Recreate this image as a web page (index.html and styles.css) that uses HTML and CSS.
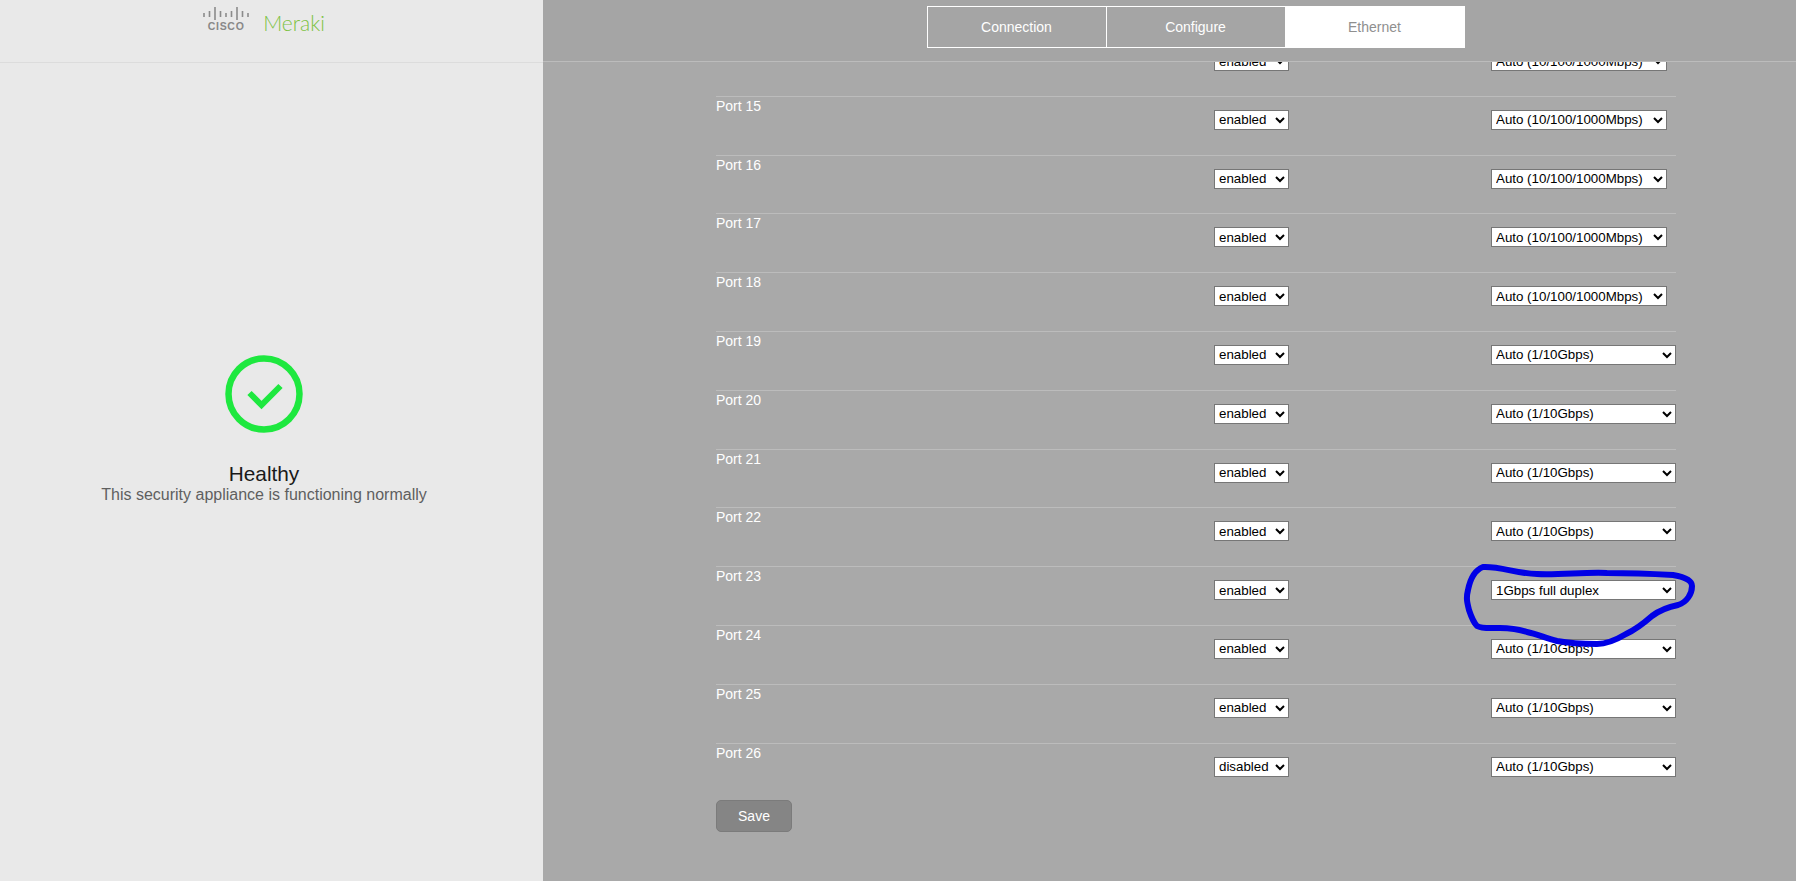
FILE: index.html
```html
<!DOCTYPE html>
<html lang="en">
<head>
  <meta charset="UTF-8">
  <meta name="viewport" content="width=device-width, initial-scale=1.0">
  <title>Meraki Local Status</title>
  <link rel="stylesheet" href="styles.css">
</head>
<body>
  <aside class="sidebar">
    <div class="sidebar-header">
      <div class="cisco-logo">
        <svg class="cisco-bars" width="46" height="13" viewBox="0 0 46 13">
          <path d="M1 6v4M6.500 4v6M12 0v13M17.500 4v6M23 6v4M28.500 4v6M34 0v13M39.500 4v6M45 6v4"/>
        </svg>
        <span class="cisco-word">CISCO</span>
      </div>
      <span class="meraki-word">Meraki</span>
    </div>
    <div class="status">
      <svg class="status-icon" width="78" height="78" viewBox="0 0 78 78">
        <circle cx="39" cy="39" r="35.500"/>
        <path d="M24.500 38 L36.500 50 L55.500 31"/>
      </svg>
      <div class="status-title">Healthy</div>
      <div class="status-text">This security appliance is functioning normally</div>
    </div>
  </aside>

  <main class="main">
    <header class="topbar">
      <nav class="tabs">
        <a class="tab">Connection</a>
        <a class="tab">Configure</a>
        <a class="tab tab-active">Ethernet</a>
      </nav>
    </header>

    <div class="scroller">
      <form class="ports">
        <div class="port-row">
          <div>Port 14</div>
          <select class="sel-state"><option>enabled</option></select>
          <select class="sel-speed"><option>Auto (10/100/1000Mbps)</option></select>
        </div>
        <div class="port-row">
          <div>Port 15</div>
          <select class="sel-state"><option>enabled</option></select>
          <select class="sel-speed"><option>Auto (10/100/1000Mbps)</option></select>
        </div>
        <div class="port-row">
          <div>Port 16</div>
          <select class="sel-state"><option>enabled</option></select>
          <select class="sel-speed"><option>Auto (10/100/1000Mbps)</option></select>
        </div>
        <div class="port-row">
          <div>Port 17</div>
          <select class="sel-state"><option>enabled</option></select>
          <select class="sel-speed"><option>Auto (10/100/1000Mbps)</option></select>
        </div>
        <div class="port-row">
          <div>Port 18</div>
          <select class="sel-state"><option>enabled</option></select>
          <select class="sel-speed"><option>Auto (10/100/1000Mbps)</option></select>
        </div>
        <div class="port-row">
          <div>Port 19</div>
          <select class="sel-state"><option>enabled</option></select>
          <select class="sel-speed sel-wide"><option>Auto (1/10Gbps)</option></select>
        </div>
        <div class="port-row">
          <div>Port 20</div>
          <select class="sel-state"><option>enabled</option></select>
          <select class="sel-speed sel-wide"><option>Auto (1/10Gbps)</option></select>
        </div>
        <div class="port-row">
          <div>Port 21</div>
          <select class="sel-state"><option>enabled</option></select>
          <select class="sel-speed sel-wide"><option>Auto (1/10Gbps)</option></select>
        </div>
        <div class="port-row">
          <div>Port 22</div>
          <select class="sel-state"><option>enabled</option></select>
          <select class="sel-speed sel-wide"><option>Auto (1/10Gbps)</option></select>
        </div>
        <div class="port-row">
          <div>Port 23</div>
          <select class="sel-state"><option>enabled</option></select>
          <select class="sel-speed sel-wide"><option>1Gbps full duplex</option></select>
        </div>
        <div class="port-row">
          <div>Port 24</div>
          <select class="sel-state"><option>enabled</option></select>
          <select class="sel-speed sel-wide"><option>Auto (1/10Gbps)</option></select>
        </div>
        <div class="port-row">
          <div>Port 25</div>
          <select class="sel-state"><option>enabled</option></select>
          <select class="sel-speed sel-wide"><option>Auto (1/10Gbps)</option></select>
        </div>
        <div class="port-row">
          <div>Port 26</div>
          <select class="sel-state"><option>disabled</option></select>
          <select class="sel-speed sel-wide"><option>Auto (1/10Gbps)</option></select>
        </div>
        <button type="button" class="save-button">Save</button>
      </form>
    </div>

    <!-- hand drawn marker ring round the port 23 speed -->
    <svg class="marker" width="280" height="110" viewBox="0 0 280 110">
      <path d="M43 17 C60 16 78 24 97 24 C120 25 145 22 167 23 C190 23 215 24 233 25 C245 27 252 30 252 36 C252 44 247 52 238 55 C228 57 220 60 212 66 C204 73 197 79 186 84 C176 90 165 94 157 94 C140 94 128 93 117 91 C105 88 97 84 87 82 C78 79 70 78 60 78 C50 78 42 79 37 76 C33 72 31 66 29 60 C27 52 26 48 28 40 C30 30 35 20 43 17 Z"/>
    </svg>
  </main>
</body>
</html>
```

FILE: styles.css
```css
* {
  box-sizing: border-box;
}
body {
  margin: 0;
  height: 100vh;
  display: flex;
  overflow: hidden;
  font-family: "Liberation Sans", Arial, sans-serif;
  font-size: 14px;
}

/* left column */
.sidebar {
  width: 543px;
  flex: none;
  padding-right: 15px;
  background-color: #e9e9e9;
  box-shadow: inset 0 0 0 0 #000;
}
.sidebar-header {
  height: 63px;
  margin-right: -15px;
  padding-right: 15px;
  padding-top: 7px;
  border-bottom: 1px solid #dcdcdc;
  display: flex;
  justify-content: center;
  align-items: flex-start;
  gap: 14px;
}
.cisco-logo {
  width: 46px;
  display: flex;
  flex-direction: column;
  align-items: center;
}
.cisco-bars path {
  stroke: #8b8b8b;
  stroke-width: 1.600;
  fill: none;
}
.cisco-word {
  font-size: 10.500px;
  font-weight: bold;
  line-height: 11px;
  letter-spacing: 0.700px;
  color: #888;
  margin-top: 1px;
}
.meraki-word {
  font-family: Lato, "Open Sans", sans-serif;
  font-weight: 300;
  font-size: 21px;
  line-height: 32px;
  color: #7cc242;
}
.status {
  padding-top: 292px;
  display: flex;
  flex-direction: column;
  align-items: center;
}
.status-icon circle {
  fill: none;
  stroke: #1ee83f;
  stroke-width: 6.500;
}
.status-icon path {
  fill: none;
  stroke: #1ee83f;
  stroke-width: 6;
}
.status-title {
  margin-top: 29px;
  font-size: 20.800px;
  line-height: 24px;
  color: #1a1a1a;
}
.status-text {
  font-size: 16px;
  line-height: 18px;
  color: #5f5f5f;
}

/* right column */
.main {
  flex: 1;
  position: relative;
  display: flex;
  flex-direction: column;
  background-color: #a9a9a9;
  color: #fff;
}
.topbar {
  height: 62px;
  flex: none;
  padding: 6px 0 0 173px;
  background-color: #a5a5a5;
  border-bottom: 1px solid #bcbcbc;
}
.tabs {
  display: flex;
  width: 960px;
  justify-content: center;
}
.tab {
  width: 180px;
  height: 42px;
  line-height: 40px;
  text-align: center;
  border: 1px solid #fff;
  margin-left: -1px;
}
.tab-active {
  background-color: #fff;
  color: #8f8f8f;
}
.scroller {
  flex: 1;
  overflow: hidden;
  padding-left: 173px;
}
.ports {
  width: 960px;
  margin-top: -25px;
}
.port-row {
  height: 58.800px;
  padding-top: 1px;
  border-top: 1px solid #bcbcbc;
  display: grid;
  grid-template-columns: 498px 277px 1fr;
  align-items: start;
  line-height: 17px;
}
select {
  height: 20px;
  padding: 0;
  margin-top: 12px;
  border: 1px solid #767676;
  border-radius: 0;
  background-color: #fff;
  color: #000;
  font-family: "Liberation Sans", Arial, sans-serif;
  font-size: 13.333px;
}
.sel-state {
  width: 75px;
}
.sel-speed {
  width: 176px;
}
.sel-wide {
  width: 185px;
}
.save-button {
  display: block;
  width: 76px;
  height: 32px;
  margin-top: -1px;
  padding: 0;
  background-color: #858585;
  border: 1px solid #7b7b7b;
  border-radius: 5px;
  color: #fff;
  font-family: "Liberation Sans", Arial, sans-serif;
  font-size: 14px;
}
.marker {
  position: absolute;
  left: 897px;
  top: 550px;
}
.marker path {
  fill: none;
  stroke: #0000e6;
  stroke-width: 6;
  stroke-linejoin: round;
}
```
